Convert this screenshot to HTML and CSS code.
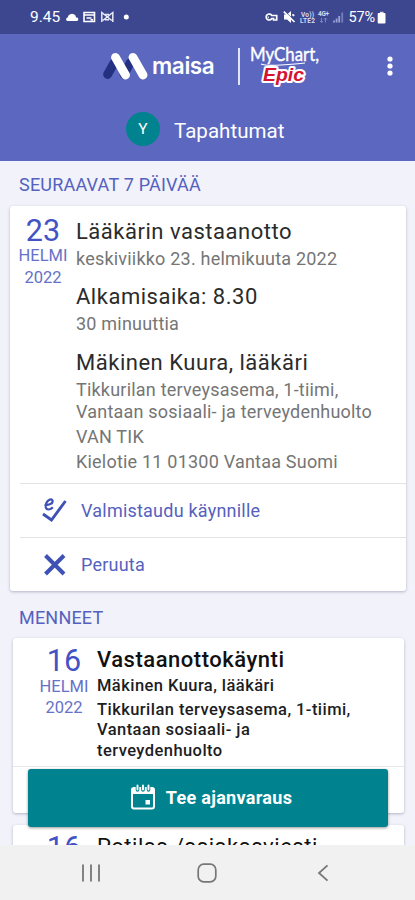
FILE: index.html
```html
<!DOCTYPE html>
<html lang="fi">
<head>
<meta charset="utf-8">
<meta name="viewport" content="width=device-width">
<title>Tapahtumat</title>
<link rel="stylesheet" href="styles.css">
</head>
<body>
<div class="phone">
  <header class="status">
    <span class="clock">9.45</span>
    <svg class="status-left" width="66" height="14" viewBox="0 0 66 14">
      <path fill="#fff" d="M3 11a1.700 1.700 0 0 1-.3-3.400 4.200 4.200 0 0 1 6.700-3 3.500 3.500 0 0 1 1.600 2.900 1.800 1.800 0 0 1 1 3.500z"/>
      <path fill="none" stroke="#fff" stroke-width="1.600" d="M19 2.500h10.500v9h-10.500zM19 5h10.500M21.500 8h5M25.500 9.700h2.500"/>
      <path fill="none" stroke="#e8eaf7" stroke-width="1.500" d="M36.800 12V2.500l10 8M47.800 12V2.500l-10 8M40 4.500h4M40 9.700h4"/>
      <circle cx="61.300" cy="7" r="2.500" fill="#fff"/>
    </svg>
    <div class="status-right">
      <svg width="82" height="14" viewBox="0 0 82 14">
        <g fill="none" stroke="#fff" stroke-width="1.700">
          <path d="M7.800 5.500A3 3 0 1 0 7.800 8.500H9.500v1.500h3.200V5.500z"/>
          <path d="M3.800 7.300h1"/>
        </g>
        <path fill="#fff" d="M20 4.500h3l4-3.500v12l-4-3.500h-3z"/>
        <path stroke="#3c4790" stroke-width="1" d="M21.500 2l10.500 10"/>
        <path stroke="#fff" stroke-width="1.700" d="M19.800 1.700l10.700 10.300M28.300 4.500l2 1.200"/>
        <g class="tiny"><text x="37" y="6.500" textLength="13">Vo))</text><text x="36" y="13" textLength="15">LTE2</text><text x="54" y="6" textLength="11">4G+</text></g>
        <path stroke="#8993cb" d="M57.500 8v4.500M56 11l1.500 1.500L59 11M61.500 12.500V8M60 9.500L61.500 8 63 9.500" fill="none" stroke-width=".8"/>
        <path stroke="#9ba4d6" stroke-width="1.800" d="M70 12.500v-2M72.600 12.500v-4M75.200 12.500v-6.500"/><path stroke="#7680bd" stroke-width="1.800" d="M78.200 12.500V2.500"/>
      </svg>
      <span class="battery">57%</span>
      <svg width="9" height="13" viewBox="0 0 9 13"><rect x=".7" y="2" width="7.800" height="10.500" rx="1" fill="#fff"/><path fill="#dfe2f3" d="M3 .8h3.500V2H3z"/></svg>
    </div>
  </header>

  <div class="appbar">
    <div class="brand">
      <svg class="mark" width="46" height="29" viewBox="0 0 46 29">
        <g stroke-linecap="round" stroke-width="8.800">
          <path stroke="#243080" d="M5.600 22.500L12 11M22 22.500L28 11"/>
          <path stroke="#fff" d="M13.500 5.400l10 17.600M31 5.400l10 17.600"/>
        </g>
      </svg>
      <span class="name">maisa</span>
      <span class="bar"></span>
      <svg class="mychart" width="73" height="42" viewBox="0 0 73 42">
        <text class="my" x="1" y="15.500" textLength="69" lengthAdjust="spacingAndGlyphs">MyChart,</text>
        <path fill="none" stroke="#fff" stroke-width="1.200" d="M12 19q4 2 20 1t24-2"/>
        <text class="epic" x="14" y="35.500" textLength="41" lengthAdjust="spacingAndGlyphs">Epic</text>
      </svg>
      <svg class="more" width="6" height="20" viewBox="0 0 6 20" fill="#fff"><circle cx="3" cy="3" r="2.600"/><circle cx="3" cy="10" r="2.600"/><circle cx="3" cy="17" r="2.600"/></svg>
    </div>
    <div class="heading"><span class="avatar">Y</span><h1>Tapahtumat</h1></div>
  </div>

  <main>
    <h2 class="upcoming">SEURAAVAT 7 PÄIVÄÄ</h2>
    <section class="card next">
      <div class="visit">
        <div class="date"><b>23</b><span>HELMI</span><span class="year">2022</span></div>
        <div class="info">
          <h3 class="t1">Lääkärin vastaanotto</h3>
          <p class="s1">keskiviikko 23. helmikuuta 2022</p>
          <h3 class="t2">Alkamisaika: 8.30</h3>
          <p class="s2">30 minuuttia</p>
          <h3 class="t3">Mäkinen Kuura, lääkäri</h3>
          <p class="s3">Tikkurilan terveysasema, 1-tiimi,<br>Vantaan sosiaali- ja terveydenhuolto</p>
          <p class="s4">VAN TIK</p>
          <p class="s5">Kielotie 11 01300 Vantaa Suomi</p>
        </div>
      </div>
      <div class="action prepare">
        <svg width="28" height="28" viewBox="0 0 28 28"><path fill="none" stroke="#3f51b5" stroke-width="2.200" d="M4.500 8c4 .5 9-1.500 8-4.500-.8-2-4.500-1-6 2.300-1.600 3.800-.7 6.700 1.800 6.700 1.800 0 3.200-.8 4.500-2.200"/><path fill="none" stroke="#3f51b5" stroke-width="2.900" d="M3 17l8.500 6L25.500 4"/></svg>
        <span>Valmistaudu käynnille</span>
      </div>
      <div class="action cancel">
        <svg width="28" height="28" viewBox="0 0 28 28"><path stroke="#3f51b5" stroke-width="4" d="M5.500 4.500L24 23M24 4.500L5.500 23"/></svg>
        <span>Peruuta</span>
      </div>
    </section>

    <h2 class="past">MENNEET</h2>
    <section class="card old">
      <div class="visit">
        <div class="date"><b>16</b><span>HELMI</span><span class="year">2022</span></div>
        <div class="info">
          <h3>Vastaanottokäynti</h3>
          <p class="who">Mäkinen Kuura, lääkäri</p>
          <p class="where">Tikkurilan terveysasema, 1-tiimi,<br>Vantaan sosiaali- ja<br>terveydenhuolto</p>
        </div>
      </div>
      <div class="foot"></div>
    </section>
    <section class="card old message">
      <div class="visit">
        <div class="date"><b>16</b></div>
        <div class="info"><h3>Potilas-/asiakasviesti</h3></div>
      </div>
    </section>
    <button class="book">
      <svg width="26" height="26" viewBox="0 0 26 26"><rect x="2" y="4" width="22" height="20.500" rx="2" fill="none" stroke="#fff" stroke-width="2"/><path fill="#fff" d="M2 4h22v6H2zM15.500 16h4.500v4.500h-4.500z"/><path stroke="#00838f" stroke-width="3.600" stroke-linecap="round" d="M7.500 1v5M13 1v5M18.500 1v5"/><path stroke="#fff" stroke-width="1.900" stroke-linecap="round" d="M7.500 1.500v4M13 1.500v4M18.500 1.500v4"/></svg>
      <span>Tee ajanvaraus</span>
    </button>
  </main>

  <nav>
    <svg width="20" height="20" viewBox="0 0 20 20"><path stroke="#777" stroke-width="1.800" d="M2 1.500v17M10 1.500v17M18 1.500v17"/></svg>
    <svg width="20" height="20" viewBox="0 0 20 20"><rect x="1.200" y="1.200" width="17.600" height="17.600" rx="5.500" fill="none" stroke="#777" stroke-width="1.700"/></svg>
    <svg width="20" height="20" viewBox="0 0 20 20"><path fill="none" stroke="#777" stroke-width="1.800" d="M14.500 2.300L6 10l8.500 7.700"/></svg>
  </nav>
</div>
</body>
</html>
```

FILE: styles.css
```css
* { box-sizing: border-box; }
body, h1, h2, h3, p { margin: 0; }
body { font-family: Roboto, "Liberation Sans", sans-serif; }
svg { display: block; flex: none; }
h1, h2, h3 { font-weight: 400; }
span, h1, h2, h3, p { white-space: nowrap; }
.phone { width: 415px; height: 900px; display: flex; flex-direction: column; overflow: hidden; background: #f1f2fa; }

.status { height: 34px; flex: none; display: flex; align-items: center; padding-left: 30px; background: #3c4790; color: #fff; }
.clock { font-size: 15.500px; width: 35px; }
.status-right { margin-left: auto; padding-right: 29px; display: flex; align-items: center; gap: 2px; }
.battery { font-size: 14.500px; letter-spacing: -.1px; }
.tiny { font-size: 6.500px; font-weight: 700; fill: #d5d9f0; }

.appbar { height: 127px; flex: none; background: #5c68c0; color: #fff; }
.brand { height: 64px; display: flex; align-items: center; padding-left: 102px; }
.name { font-family: Inter, sans-serif; font-weight: 600; font-size: 22.500px; line-height: 28px; width: 65px; margin-left: 4px; letter-spacing: -.4px; }
.bar { width: 1.500px; height: 37px; background: #e1e4f5; margin-left: 21px; }
.mychart { margin: 0 0 0 9px; overflow: visible; }
.my { font-family: Lato, sans-serif; font-size: 18.500px; fill: #fff; stroke: #fff; stroke-width: .4px; }
.epic { font-family: "Liberation Sans", sans-serif; font-size: 19px; font-weight: 700; font-style: italic; fill: #d5122f; stroke: #fff; stroke-width: 4px; paint-order: stroke; stroke-linejoin: round; }
.more { margin-left: 65px; }
.heading { display: flex; align-items: center; height: 34px; margin-top: 14px; padding-left: 126px; }
.avatar { width: 34px; height: 34px; border-radius: 50%; background: #00838f; font-size: 15.500px; line-height: 34px; text-align: center; }
h1 { font-size: 20.500px; line-height: 26px; margin-left: 14px; padding-top: 3px; letter-spacing: .05px; }

main { position: relative; height: 684px; flex: none; overflow: hidden; }
h2 { color: #5561be; font-size: 18px; line-height: 22px; padding-left: 19px; letter-spacing: .2px; }
.upcoming { padding-top: 13px; height: 45px; }
.past { padding-top: 16px; height: 47px; }
.card { background: #fff; border-radius: 3px; box-shadow: 0 1px 3px rgba(40, 40, 80, .3); }
.next { margin: 0 9px 0 10px; height: 385px; }
.next .visit { height: 277px; }
.visit { display: flex; }
.date { width: 66px; padding-top: 8px; text-align: center; color: #6671c8; }
.date b { display: block; font-weight: 400; font-size: 30.500px; line-height: 34px; color: #4353c5; }
.date span { display: block; font-size: 16.500px; line-height: 20px; margin-top: -2px; }
.date .year { margin-top: 2px; }
.info { padding-top: 13px; color: #757575; }
.info h3 { font-size: 22px; line-height: 26px; color: #2b2b2b; letter-spacing: .52px; }
.info p { font-size: 18px; line-height: 22px; margin-top: 3px; letter-spacing: .21px; }
.info .t2 { margin-top: 14px; }
.info .t3 { margin-top: 15px; }
.action { height: 54px; margin-left: 10px; border-top: 1px solid #e3e3e6; display: flex; align-items: center; padding-left: 20px; color: #5561be; font-size: 18px; letter-spacing: .22px; }
.action svg { width: 28px; margin-right: 13px; }

.old { margin: 0 11px 0 13px; height: 175px; }
.old .visit { height: 128px; padding-left: 18px; }
.old .date { padding-top: 6px; }
.old .date span { margin-top: -1px; }
.old .date .year { margin-top: 1px; }
.old .info { padding: 9px 0 0; color: #1d1d1f; }
.old h3 { font-weight: 500; color: #111; }
.old p { font-size: 16.500px; font-weight: 500; line-height: 20.500px; letter-spacing: .44px; }
.info .who { margin-top: 3px; }
.foot { border-top: 1px solid #e8e8ec; height: 47px; }
.message { margin-top: 12px; }
.message .info h3 { font-weight: 400; }
.book { position: absolute; left: 28px; top: 608px; width: 360px; height: 58px; border: 0; border-radius: 3px; padding: 0 0 2px; background: #00838f; color: #fff; display: flex; align-items: center; justify-content: center; gap: 10px; padding-left: 6px; font: 700 18px Roboto, sans-serif; letter-spacing: .3px; box-shadow: 0 1px 3px rgba(0, 0, 0, .4); }
nav { height: 55px; flex: none; background: #f1f1f1; display: flex; justify-content: space-between; padding: 18px 82px 0 81px; }
```
